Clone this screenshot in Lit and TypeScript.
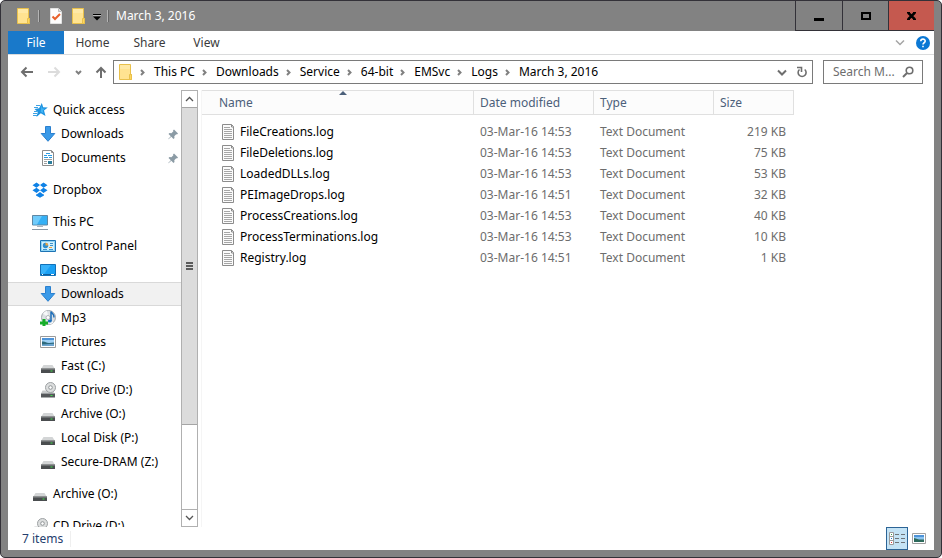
import { LitElement, html, css, svg, nothing } from "lit";
import { customElement } from "lit/decorators.js";
import { classMap } from "lit/directives/class-map.js";

const icon = (body: unknown, w = 16, h = 16) =>
  html`<svg class="icon" width=${w} height=${h} viewBox="0 0 ${w} ${h}" aria-hidden="true">${body}</svg>`;

const folder = svg`
  <path d="M1.500 .5h11v10h1v5h-12z" fill="#ffe391" stroke="#e8c04c"/>
  <path d="M2 1h10v4H2z" fill="#ffe9a6"/>
  <path d="M11.500 10.500h2v5h-2z" fill="#ffd75e" stroke="#e8c04c"/>`;

const checkDoc = svg`
  <path d="M2.500 .5h8l3 3v12h-11z" fill="#fdfdfd" stroke="#e2e2e2"/>
  <path d="M10.500 .5v3h3" fill="#ddd" stroke="#bbb"/>
  <path d="M4.500 8.500l2.500 2.500 5-5" fill="none" stroke="#e8612c" stroke-width="2"/>`;

const star = svg`
  <path d="M9.800 1l1.400 4.300 4.600.2-3.800 3 1.500 5.500-4.700-2.700L4.500 15l1.200-5L2.500 7l4.600-.8z" fill="#1f93e0"/>
  <path d="M9.500 3.800l.9 2.700 2.600.3-2.200 1.800.6 2.700-2.700-1.500z" fill="#41b5f5"/>
  <path d="M4 3.500h4M2 5.500h4M2 9.500h3M1 11.500h4M1 13.500h4" stroke="#3da2e4"/>`;

const down = svg`<path d="M5.500 .5h5v7h4.300L8 15.300 1.200 7.500h4.300z" fill="#3b9ae8" stroke="#2b80cf"/>`;

const documentIcon = svg`
  <path d="M2.500 .5h9l2 2v13h-11z" fill="#fff" stroke="#8c8c8c"/>
  <path d="M11.500 .5v2h2" fill="none" stroke="#8c8c8c"/>
  <path d="M6 3.500h4M4 5.500h3M8 5.500h4M4 7.500h4M9 7.500h3" stroke="#2e9be0"/>
  <path d="M4 9.500h8M4 11.500h3M4 13.500h3" stroke="#a0a0a0"/>
  <path d="M8 11h4v3H8z" fill="#2a7d9c"/>`;

const dropbox = svg`
  <path d="M4.500 .5L8 3l-3.500 2.700L.5 3.200zM11.500 .5l4 2.700-4 2.500L8 3zM.5 8.300l4-2.600L8 8.300 4.500 11zM15.500 8.300l-4-2.600L8 8.300l3.500 2.700zM4 12.200l.7.300L8 10l3.300 2.500.7-.3v1.200L8 15.800l-4-2.400z" fill="#0f82e6"/>`;

const pc = svg`
  <path d="M.5 1.500h15v9.500H.5z" fill="#35b0f5" stroke="#5f87a3"/>
  <path d="M1 2h9L5 10.500H1z" fill="#6fcbfb"/>
  <path d="M5 12.500h6" stroke="#a9b4bd"/><path d="M0 15.500h16" stroke="#8a99a6"/>`;

const control = svg`
  <path d="M.5 2.500h15v11H.5z" fill="#8fd4f5" stroke="#1d73b4"/>
  <path d="M2 4h12v8H2z" fill="#d4f0fc"/>
  <circle cx="5.500" cy="7.500" r="2.700" fill="#2c8ed0"/><path d="M5.500 7.500V4.800a2.700 2.700 0 0 1 2.700 2.700z" fill="#f2a33a"/>
  <path d="M10 5.500h3M10 7.500h3M3 11.500h4M9 11.500h4" stroke="#3d93c9"/><path d="M9 9.500h3" stroke="#f2a33a"/>`;

const desktop = svg`
  <path d="M.5 2.500h15v11H.5z" fill="#1aa0f4" stroke="#1271b8"/>
  <path d="M1 3h10L4 12H1z" fill="#38b2fa"/>
  <path d="M1 12.500h14" stroke="#0d5f9f"/><path d="M2 12.500h1M11 12.500h3" stroke="#fff"/>`;

const music = svg`
  <circle cx="8.500" cy="7.500" r="7" fill="#dde1e4" stroke="#a3a9ad"/>
  <path d="M8.500 7.500L3 3.500a7 7 0 0 1 4-2.700zM8.500 7.500l5 5a7 7 0 0 1-4 1.700z" fill="#f7f8f9"/>
  <circle cx="8" cy="7.500" r="2" fill="#fff" stroke="#b0b6ba"/>
  <path d="M11 11V1.500c1 2 3.500 2.500 3 6" fill="none" stroke="#1d6db8" stroke-width="1.500"/>
  <ellipse cx="9.800" cy="11" rx="2" ry="1.600" fill="#1d6db8"/>
  <path d="M2.500 9h3v2.500H8v3H5.500V16h-3v-1.500H0v-3h2.500z" fill="#17ad2a"/>`;

const picture = svg`
  <path d="M.5 2.500h15v11H.5z" fill="#fff" stroke="#9a9a9a"/>
  <path d="M2 4h12v8H2z" fill="#9fd0f4"/><path d="M2 4h12v2H2z" fill="#4d93d8"/>
  <path d="M2 7.500c3-.5 4 1 7 1.500l5-.5V12H2z" fill="#2d6a7c"/><path d="M2 10.500l12-.8V12H2z" fill="#6ba4cf"/>`;

const drive = svg`
  <path d="M3.500 7h9L15 11H1z" fill="#d3d5d6"/>
  <path d="M1 10.500h14V15H1z" fill="#4a4d4f"/><path d="M1 10.500h14v1H1z" fill="#8f9294"/>
  <path d="M10.500 12.500h2v1h-2z" fill="#3fe04a"/>`;

const cd = svg`
  <path d="M2.500 8.500h9L15 11.500H1z" fill="#c9cbcc"/>
  <circle cx="10.500" cy="5.500" r="5" fill="#dcdede" stroke="#9da1a3"/>
  <circle cx="10.500" cy="5.500" r="1.800" fill="#fff" stroke="#8f9496"/>
  <path d="M1 11h14v4.500H1z" fill="#55585a"/><path d="M1 11h14v1H1z" fill="#9b9ea0"/>
  <path d="M10.500 13h2v1h-2z" fill="#3fe04a"/>`;

const textFile = svg`
  <path d="M.5 .5h9l2 2v13H.5z" fill="#fbfbfb" stroke="#8c8c8c"/>
  <path d="M9.500 .5v2.500h2" fill="none" stroke="#8c8c8c"/>
  <path d="M2 3.500h6M2 5.500h8M2 7.500h8M2 9.500h8M2 11.500h8M2 13.500h8" stroke="#a6a6a6"/>`;

const pin = svg`<path d="M6 .5L10 4.500 9 5.500 8.200 5.200 6.300 7.200 6.500 9 5.500 10 3.300 7.700.5 10.200.2 10 2.800 7.200.5 5 1.500 4l1.900.2 2-1.900L5 1.500z" fill="#8b9ba5"/>`;

const chevron = svg`<path d="M1 1l2.500 2.500L1 6" fill="none" stroke="#808080" stroke-width="2"/>`;

const caret = (color: string, width = 2) =>
  icon(svg`<path d="M1 1.500l4 4 4-4" fill="none" stroke=${color} stroke-width=${width}/>`, 10, 7);

interface Place {
  label: string;
  art: unknown;
  root?: boolean;
  gap?: boolean;
  pinned?: boolean;
  current?: boolean;
}

const places: Place[] = [
  { label: "Quick access", art: star, root: true },
  { label: "Downloads", art: down, pinned: true },
  { label: "Documents", art: documentIcon, pinned: true },
  { label: "Dropbox", art: dropbox, root: true, gap: true },
  { label: "This PC", art: pc, root: true, gap: true },
  { label: "Control Panel", art: control },
  { label: "Desktop", art: desktop },
  { label: "Downloads", art: down, current: true },
  { label: "Mp3", art: music },
  { label: "Pictures", art: picture },
  { label: "Fast (C:)", art: drive },
  { label: "CD Drive (D:)", art: cd },
  { label: "Archive (O:)", art: drive },
  { label: "Local Disk (P:)", art: drive },
  { label: "Secure-DRAM (Z:)", art: drive },
  { label: "Archive (O:)", art: drive, root: true, gap: true },
  { label: "CD Drive (D:)", art: cd, root: true, gap: true },
];

const files = [
  ["FileCreations.log", "03-Mar-16 14:53", "219 KB"],
  ["FileDeletions.log", "03-Mar-16 14:53", "75 KB"],
  ["LoadedDLLs.log", "03-Mar-16 14:53", "53 KB"],
  ["PEImageDrops.log", "03-Mar-16 14:51", "32 KB"],
  ["ProcessCreations.log", "03-Mar-16 14:53", "40 KB"],
  ["ProcessTerminations.log", "03-Mar-16 14:53", "10 KB"],
  ["Registry.log", "03-Mar-16 14:51", "1 KB"],
];

const trail = ["This PC", "Downloads", "Service", "64-bit", "EMSvc", "Logs", "March 3, 2016"];

@customElement("app-root")
export class AppRoot extends LitElement {
  static styles = css`
    :host {
      display: flex;
      flex-direction: column;
      box-sizing: border-box;
      height: 100vh;
      padding: 0 7px 7px;
      border: 1px solid #333138;
      border-radius: 5px;
      background: #828282;
      color: #000;
      font: 12px/16px "Noto Sans", "Open Sans", sans-serif;
      overflow: hidden;
    }
    * { box-sizing: border-box; }
    button, input {
      font: inherit;
      color: inherit;
      background: none;
      border: 0;
      padding: 0;
      margin: 0;
    }
    a { color: inherit; text-decoration: none; }
    .icon { display: block; flex: none; }

    .titlebar { display: flex; height: 30px; flex: none; align-items: center; padding-left: 8px; color: #fff; }
    .quick { display: flex; align-items: center; }
    .sep { width: 2px; height: 12px; border-left: 1px solid #b4b4b4; border-right: 1px solid #666; margin: 0 7px 0 6px; }
    .check { margin: 0 7px 0 1px; }
    .more { margin-left: 6px; }
    .title { font: inherit; margin: 0; flex: 1; }
    .controls { display: flex; align-self: stretch; border-bottom: 1px solid #333138; }
    .controls button { display: flex; align-items: center; justify-content: center; width: 46px; border-left: 1px solid #333138; }
    .controls .min { width: 47px; }
    .controls .close { background: #c5594f; }

    .ribbon { display: flex; height: 24px; flex: none; align-items: stretch; background: #fff; border-bottom: 1px solid #dadbdc; color: #3b3b3b; }
    .ribbon .tab { min-width: 57px; text-align: center; }
    .ribbon .file { width: 56px; min-width: 0; background: #1979ca; color: #fff; }
    .ribbon .right { display: flex; align-items: center; gap: 11px; margin-left: auto; padding-right: 4px; }

    .navbar { display: flex; flex: none; padding: 5px 11px 6px 12px; background: #fff; align-items: center; }
    .history { display: flex; align-items: center; width: 93px; justify-content: space-between; padding-right: 6px; }
    .address { display: flex; align-items: center; flex: 1; height: 24px; border: 1px solid #7a7a7a; padding: 0 4px; min-width: 0; }
    .trail { display: flex; list-style: none; margin: 0; padding: 0 0 0 6px; flex: 1; }
    .trail li { display: flex; align-items: center; gap: 9px; margin-right: 7px; white-space: nowrap; }
    .refresh { margin-left: 9px; }
    .search { display: flex; align-items: center; width: 100px; height: 24px; margin-left: 10px; border: 1px solid #7a7a7a; padding: 0 8px 0 9px; }
    .search input { flex: 1; min-width: 0; outline: 0; color: #6d6d6d; }
    .search input::placeholder { color: #6d6d6d; opacity: 1; }

    .body { display: flex; flex: 1; min-height: 0; background: #fff; }
    .side { width: 173px; flex: none; overflow: hidden; }
    .side ul { list-style: none; margin: 0; padding: 8px 0 0; }
    .place { display: flex; align-items: center; height: 24px; gap: 5px; padding: 0 3px 0 32px; border: 1px solid transparent; border-width: 1px 0; white-space: nowrap; }
    .place.root { padding-left: 24px; }
    .place.current { background: #f1f1f1; border-color: #d9d9d9; }
    .gap { margin-top: 8px; }
    .pin { margin-left: auto; }

    .scroll { display: flex; flex-direction: column; width: 17px; flex: none; border: 1px solid #b0b0b0; margin-right: 3px; }
    .scroll button { display: flex; align-items: center; justify-content: center; height: 16px; flex: none; }
    .track { flex: 1; border-bottom: 1px solid #b0b0b0; }
    .thumb { display: flex; align-items: center; justify-content: center; height: 79%; background: #dcdcdc; border: 1px solid #a5a5a5; border-width: 1px 0; }

    .files { flex: 1; min-width: 0; border-left: 1px solid #f5f5f5; }
    table { width: 592px; table-layout: fixed; border-collapse: separate; border-spacing: 0; }
    .c-name { width: 272px; }
    .c-mid { width: 120px; }
    .c-size { width: 80px; }
    th { height: 25px; padding: 0; border: 1px solid #e0e0e0; border-left: 0; background: #fcfcfc; font-weight: normal; color: #4c607a; }
    th.name { padding-left: 11px; }
    th button { position: relative; display: block; width: 100%; text-align: left; padding-left: 6px; }
    .sort { position: absolute; left: 0; right: 0; top: -4px; display: flex; justify-content: center; }
    .lead td { height: 6px; }
    .row td { height: 21px; padding: 0 6px; color: #6d6d6d; white-space: nowrap; }
    .row td.name { padding-left: 20px; }
    .name a { display: flex; align-items: center; gap: 6px; color: #000; }
    .row td.size { text-align: right; padding-right: 8px; }

    .status { display: flex; flex: none; height: 23px; background: #fff; align-items: center; padding: 0 8px 0 14px; color: #26406e; }
    .count { padding-right: 7px; border-right: 1px solid #efefef; }
    .views { display: flex; margin-left: auto; align-items: center; gap: 4px; align-self: stretch; }
    .views .details { display: flex; align-items: center; justify-content: center; width: 22px; height: 23px; background: #c4e3f5; border: 1px solid #2c6496; }
  `;

  render() {
    return html`
      <header class="titlebar">
        <div class="quick">
          ${icon(folder)}
          <span class="sep"></span>
          <button class="check" aria-label="Properties">${icon(checkDoc)}</button>
          <button aria-label="New folder">${icon(folder)}</button>
          <button class="more" aria-label="Customize">
            ${icon(svg`<path d="M0 2.500h8" stroke="#000"/><path d="M0 4.500h8L4 8.500z" fill="#000"/><path d="M0 3.500h8" stroke="#bbb"/>`, 8, 9)}
          </button>
          <span class="sep"></span>
        </div>
        <h1 class="title">March 3, 2016</h1>
        <div class="controls">
          <button class="min" aria-label="Minimize">${icon(svg`<path d="M0 8h10v3H0z"/>`, 10, 12)}</button>
          <button aria-label="Maximize">${icon(svg`<path d="M1 1h8v6H1z" fill="none" stroke="#000" stroke-width="2"/>`, 10, 8)}</button>
          <button class="close" aria-label="Close">${icon(svg`<path d="M1 .5l7 7M8 .5L1 7.500" stroke="#000" stroke-width="2.500"/><path d="M0 .5h3M6 .5h3M0 7.500h3M6 7.500h3" stroke="#000"/>`, 9, 8)}</button>
        </div>
      </header>

      <div class="ribbon">
        <button class="tab file">File</button>
        <button class="tab">Home</button>
        <button class="tab">Share</button>
        <button class="tab">View</button>
        <div class="right">
          <button aria-label="Expand the ribbon">${caret("#a5a5a5", 1.5)}</button>
          <button aria-label="Help">
            <svg class="icon" width="14" height="14" viewBox="0 0 14 14" aria-hidden="true">
              <circle cx="7" cy="7" r="7" fill="#0b78d4" />
              <path d="M4.800 5.200C4.800 2.500 9.200 2.500 9.200 5.100 9.200 6.800 7 6.700 7 8.500M7 9.700v1.600" fill="none" stroke="#fff" stroke-width="1.600" />
            </svg>
          </button>
        </div>
      </div>

      <div class="navbar">
        <div class="history">
          <button aria-label="Back">${icon(svg`<path d="M13 6H2M6.500 1.500L2 6l4.500 4.500" fill="none" stroke="#6e6e6e" stroke-width="2"/>`, 14, 12)}</button>
          <button aria-label="Forward">${icon(svg`<path d="M1 6h11M7.500 1.500L12 6l-4.500 4.500" fill="none" stroke="#dcdcdc" stroke-width="2"/>`, 14, 12)}</button>
          <button aria-label="Recent locations">${icon(svg`<path d="M1 1l2.500 2.500L6 1" fill="none" stroke="#808080" stroke-width="2"/>`, 7, 5)}</button>
          <button aria-label="Up">${icon(svg`<path d="M6 12V2M1.500 6.500L6 2l4.500 4.500" fill="none" stroke="#6e6e6e" stroke-width="2"/>`, 12, 13)}</button>
        </div>
        <div class="address">
          ${icon(folder)}
          <ol class="trail">
            ${trail.map((t) => html`<li>${icon(chevron, 5, 7)}<a href="#">${t}</a></li>`)}
          </ol>
          <button aria-label="Previous locations">${caret("#6e6e6e")}</button>
          <button class="refresh" aria-label="Refresh">
            ${icon(svg`<path d="M3.500 3.500A4 4 0 1 0 8.700 3.500" fill="none" stroke="#6e6e6e" stroke-width="1.600"/><path d="M1 1.500h4.500V6" fill="none" stroke="#6e6e6e" stroke-width="1.600"/>`, 12, 12)}
          </button>
        </div>
        <label class="search">
          <input type="text" placeholder="Search M..." aria-label="Search" />
          ${icon(svg`<circle cx="7.500" cy="4.500" r="3.300" fill="none" stroke="#6e6e6e" stroke-width="1.600"/><path d="M5 7L1 11" stroke="#6e6e6e" stroke-width="2"/>`, 12, 12)}
        </label>
      </div>

      <div class="body">
        <nav class="side" aria-label="Places">
          <ul>
            ${places.map(
              (p) => html`<li class=${classMap({ gap: !!p.gap })}>
                <a href="#" class=${classMap({ place: true, root: !!p.root, current: !!p.current })}>
                  ${icon(p.art)}<span>${p.label}</span>
                  ${p.pinned ? html`<span class="pin">${icon(pin, 10, 11)}</span>` : nothing}
                </a>
              </li>`
            )}
          </ul>
        </nav>
        <div class="scroll">
          <button aria-label="Scroll up">${icon(svg`<path d="M1 5l3.500-3.500L8 5" fill="none" stroke="#555" stroke-width="1.300"/>`, 9, 6)}</button>
          <div class="track">
            <div class="thumb">${icon(svg`<path d="M0 1h7M0 4h7M0 7h7" stroke="#5c5c5c" stroke-width="2"/>`, 7, 8)}</div>
          </div>
          <button aria-label="Scroll down">${icon(svg`<path d="M1 1l3.500 3.500L8 1" fill="none" stroke="#555" stroke-width="1.300"/>`, 9, 6)}</button>
        </div>
        <main class="files">
          <table>
            <colgroup><col class="c-name" /><col class="c-mid" /><col class="c-mid" /><col class="c-size" /></colgroup>
            <thead>
              <tr>
                <th class="name" scope="col" aria-sort="ascending">
                  <button>Name<span class="sort">${icon(svg`<path d="M0 4l4-4 4 4z" fill="#4c607a"/>`, 8, 4)}</span></button>
                </th>
                <th scope="col"><button>Date modified</button></th>
                <th scope="col"><button>Type</button></th>
                <th scope="col"><button>Size</button></th>
              </tr>
            </thead>
            <tbody>
              <tr class="lead" aria-hidden="true"><td colspan="4"></td></tr>
              ${files.map(
                ([name, date, size]) => html`<tr class="row">
                  <td class="name"><a href="#">${icon(textFile, 12, 16)}${name}</a></td>
                  <td>${date}</td>
                  <td>Text Document</td>
                  <td class="size">${size}</td>
                </tr>`
              )}
            </tbody>
          </table>
        </main>
      </div>

      <footer class="status">
        <span class="count">7 items</span>
        <div class="views">
          <button class="details" aria-label="Details view">
            ${icon(svg`<path d="M.5 .5h4v12h-4zM.5 4.500h4M.5 8.500h4" fill="#fff" stroke="#9a9a9a"/>
              <path d="M2 2.500h1" stroke="#3a9a4a"/><path d="M2 6.500h1" stroke="#1979ca"/><path d="M2 10.500h1" stroke="#d33"/>
              <path d="M6 2.500h4M12 2.500h4M6 6.500h4M12 6.500h4M6 10.500h4M12 10.500h4" stroke="#6e7479"/>`, 16, 13)}
          </button>
          <button aria-label="Large icons view">${icon(svg`<path d="M.5 .5h13v10H.5z" fill="#fff" stroke="#a0a0a0"/>
            <path d="M2 2h10v7H2z" fill="#8cc4f0"/><path d="M2 2h10v2H2z" fill="#4d93d8"/><path d="M2 5l5 1.500h5V9H2z" fill="#2d6a5c"/>`, 14, 11)}</button>
        </div>
      </footer>
    `;
  }
}
